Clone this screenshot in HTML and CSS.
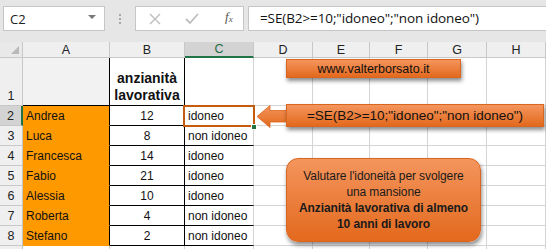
FILE: index.html
```html
<!DOCTYPE html>
<html>
<head>
<meta charset="utf-8">
<link rel="stylesheet" href="styles.css">
</head>
<body>
<div class="app">
  <div class="toolbar">
    <div class="namebox"><span>C2</span><span class="caret"></span></div>
    <div class="dots"><i></i><i></i><i></i></div>
    <div class="fbtns">
      <svg class="ico" width="14" height="14" viewBox="0 0 14 14"><path d="M2 2 L12 12 M12 2 L2 12" stroke="#bdbdbd" stroke-width="1.4" fill="none"/></svg>
      <svg class="ico" width="16" height="14" viewBox="0 0 16 14"><path d="M2 7 L6 11 L14 2" stroke="#bdbdbd" stroke-width="1.8" fill="none"/></svg>
      <span class="fx">f<sub>x</sub></span>
    </div>
    <div class="finput">=SE(B2&gt;=10;"idoneo";"non idoneo")</div>
  </div>
  <div class="sheet">
    <div class="grid">
      <div class="corner"><span class="tri"></span></div>
      <div class="h">A</div>
      <div class="h">B</div>
      <div class="h sel">C</div>
      <div class="h">D</div>
      <div class="h">E</div>
      <div class="h">F</div>
      <div class="h">G</div>
      <div class="h">H</div>

      <div class="rh bottom">1</div>
      <div class="c a1"></div>
      <div class="c b b1">anzianità<br>lavorativa</div>
      <div class="c cc c1"></div>
      <div class="c"></div><div class="c"></div><div class="c"></div><div class="c"></div><div class="c"></div>

      <div class="rh sel">2</div>
      <div class="c a">Andrea</div>
      <div class="c b">12</div>
      <div class="c cc">idoneo</div>
      <div class="c"></div><div class="c"></div><div class="c"></div><div class="c"></div><div class="c"></div>

      <div class="rh">3</div>
      <div class="c a">Luca</div>
      <div class="c b">8</div>
      <div class="c cc">non idoneo</div>
      <div class="c"></div><div class="c"></div><div class="c"></div><div class="c"></div><div class="c"></div>

      <div class="rh">4</div>
      <div class="c a">Francesca</div>
      <div class="c b">14</div>
      <div class="c cc">idoneo</div>
      <div class="c"></div><div class="c"></div><div class="c"></div><div class="c"></div><div class="c"></div>

      <div class="rh">5</div>
      <div class="c a">Fabio</div>
      <div class="c b">21</div>
      <div class="c cc">idoneo</div>
      <div class="c"></div><div class="c"></div><div class="c"></div><div class="c"></div><div class="c"></div>

      <div class="rh">6</div>
      <div class="c a">Alessia</div>
      <div class="c b">10</div>
      <div class="c cc">idoneo</div>
      <div class="c"></div><div class="c"></div><div class="c"></div><div class="c"></div><div class="c"></div>

      <div class="rh">7</div>
      <div class="c a">Roberta</div>
      <div class="c b">4</div>
      <div class="c cc">non idoneo</div>
      <div class="c"></div><div class="c"></div><div class="c"></div><div class="c"></div><div class="c"></div>

      <div class="rh">8</div>
      <div class="c a">Stefano</div>
      <div class="c b">2</div>
      <div class="c cc">non idoneo</div>
      <div class="c"></div><div class="c"></div><div class="c"></div><div class="c"></div><div class="c"></div>

      <div class="rh"></div>
      <div class="c"></div><div class="c"></div><div class="c"></div>
      <div class="c"></div><div class="c"></div><div class="c"></div><div class="c"></div><div class="c"></div>
    </div>

    <div class="selbox"></div>
    <div class="handle"></div>
    <div class="shape banner">www.valterborsato.it</div>
    <svg class="arrow" width="31" height="23" viewBox="0 0 31 23">
      <defs>
        <linearGradient id="og" x1="0" y1="0" x2="0" y2="1">
          <stop offset="0" stop-color="#f4945c"/>
          <stop offset="1" stop-color="#e2691c"/>
        </linearGradient>
      </defs>
      <path d="M1 11.5 L14 0.5 L14 5.5 L31 5.5 L31 17 L14 17 L14 22.5 Z" fill="url(#og)" stroke="#d9661f" stroke-width="0.8"/>
    </svg>
    <div class="shape formula">=SE(B2&gt;=10;"idoneo";"non idoneo")</div>
    <div class="shape note">
      <div>Valutare l'idoneità per svolgere</div>
      <div>una mansione</div>
      <div class="bold">Anzianità lavorativa di almeno</div>
      <div class="bold">10 anni di lavoro</div>
    </div>
  </div>
</div>
</body>
</html>
```

FILE: styles.css
```css
* { box-sizing: border-box; }
html, body { margin: 0; padding: 0; }
body {
  width: 546px;
  height: 249px;
  overflow: hidden;
  background: #e6e6e6;
  font-family: "Liberation Sans", Arial, sans-serif;
}
.app { width: 546px; height: 249px; overflow: hidden; }

.toolbar {
  height: 42px;
  display: flex;
  align-items: flex-start;
  padding-top: 6px;
  padding-left: 3px;
  background: #e6e6e6;
  font-family: "Open Sans", "Noto Sans", sans-serif;
}
.namebox {
  width: 102px;
  height: 25px;
  background: #fff;
  border: 1px solid #c6c6c6;
  display: flex;
  align-items: center;
  justify-content: space-between;
  padding: 0 5px 0 6px;
  font-size: 13px;
  color: #222;
}
.caret {
  width: 0; height: 0;
  border-left: 4px solid transparent;
  border-right: 4px solid transparent;
  border-top: 4px solid #777;
  margin-right: 3px;
  margin-top: -4px;
}
.dots {
  width: 30px;
  height: 25px;
  display: flex;
  flex-direction: column;
  align-items: center;
  justify-content: center;
  gap: 2px;
}
.dots i { display: block; width: 2px; height: 2px; background: #a8a8a8; }
.fbtns {
  width: 109px;
  height: 25px;
  background: #fff;
  border: 1px solid #c6c6c6;
  display: flex;
  align-items: center;
  padding-left: 12px;
  gap: 22px;
}
.ico { display: block; }
.fx {
  font-family: "Liberation Serif", serif;
  font-style: italic;
  font-size: 13px;
  color: #555;
  margin-left: 3px;
  margin-top: -3px;
}
.fx sub { font-size: 9px; vertical-align: -1px; }
.finput {
  flex: 1;
  margin-left: 4px;
  height: 25px;
  background: #fff;
  border: 1px solid #c6c6c6;
  border-right: none;
  padding-left: 11px;
  font-size: 13.5px;
  line-height: 23px;
  color: #111;
  white-space: nowrap;
  letter-spacing: -0.1px;
}

.sheet { position: relative; background: #fff; }
.grid {
  display: grid;
  grid-template-columns: 23px 87px 75px 69px 59px 57px 58px 59px 59px;
  grid-template-rows: 16px 48px repeat(9, 20px);
}
.corner {
  background: #e9e9e9;
  border-right: 1px solid #c8c8c8;
  border-bottom: 1px solid #c8c8c8;
  position: relative;
}
.tri {
  position: absolute;
  right: 3px; bottom: 3px;
  width: 0; height: 0;
  border-left: 8px solid transparent;
  border-bottom: 8px solid #b9b9b9;
}
.h {
  background: #efefef;
  border-right: 1px solid #c8c8c8;
  border-bottom: 1px solid #c8c8c8;
  font-size: 12.5px;
  color: #222;
  display: flex;
  align-items: center;
  justify-content: center;
}
.h.sel {
  background: #d3d3d3;
  border-bottom: 2px solid #217346;
  color: #1e6b41;
}
.rh {
  background: #efefef;
  border-right: 1px solid #c8c8c8;
  border-bottom: 1px solid #c8c8c8;
  font-size: 12.5px;
  color: #222;
  display: flex;
  align-items: center;
  justify-content: center;
}
.rh.bottom { align-items: flex-end; padding-bottom: 2px; }
.rh.sel {
  background: #d3d3d3;
  border-right: 2px solid #217346;
}
.c {
  border-right: 1px solid #d4d4d4;
  border-bottom: 1px solid #d4d4d4;
  font-size: 12px;
  color: #111;
  display: flex;
  align-items: center;
  padding: 1px 3px 0;
  white-space: nowrap;
}
.a {
  background: #ff9900;
  border-right: 1px solid #000;
  border-bottom: 1px solid #ff9900;
}
.a1 {
  background: #f2f2f2;
  border-right: 1px solid #000;
  border-bottom: 1px solid #000;
}
.b {
  border-right: 1px solid #000;
  border-bottom: 1px solid #000;
  justify-content: center;
}
.b1 {
  font-weight: bold;
  font-size: 14px;
  line-height: 17px;
  text-align: center;
  align-items: flex-end;
  padding: 0 0 1px;
}
.cc {
  border-bottom: 1px solid #000;
}
.c1 { border-bottom: 1px solid #000; }

.selbox {
  position: absolute;
  left: 183px;
  top: 63px;
  width: 72px;
  height: 22px;
  border: 2px solid #c55a11;
}
.handle {
  position: absolute;
  left: 251px;
  top: 82px;
  width: 6px;
  height: 6px;
  background: #217346;
  border: 1px solid #fff;
}
.shape {
  position: absolute;
  background: linear-gradient(#f4955d, #e3691d);
  border: 1px solid #d9661f;
  color: #111;
  text-align: center;
  font-family: "Liberation Sans", Arial, sans-serif;
  box-shadow: 1px 3px 4px rgba(0,0,0,0.45);
}
.banner {
  left: 286px;
  top: 17px;
  width: 175px;
  height: 19px;
  font-size: 12.5px;
  line-height: 18px;
}
.arrow {
  position: absolute;
  left: 256px;
  top: 63px;
}
.formula {
  left: 286px;
  top: 62px;
  width: 258px;
  height: 23px;
  font-size: 13.5px;
  line-height: 22px;
}
.note {
  left: 286px;
  top: 116px;
  width: 195px;
  height: 84px;
  border-radius: 12px;
  font-size: 12px;
  line-height: 16px;
  display: flex;
  flex-direction: column;
  justify-content: center;
  color: #1a1a1a;
  letter-spacing: -0.1px;
}
.note .bold { font-weight: bold; }
```
